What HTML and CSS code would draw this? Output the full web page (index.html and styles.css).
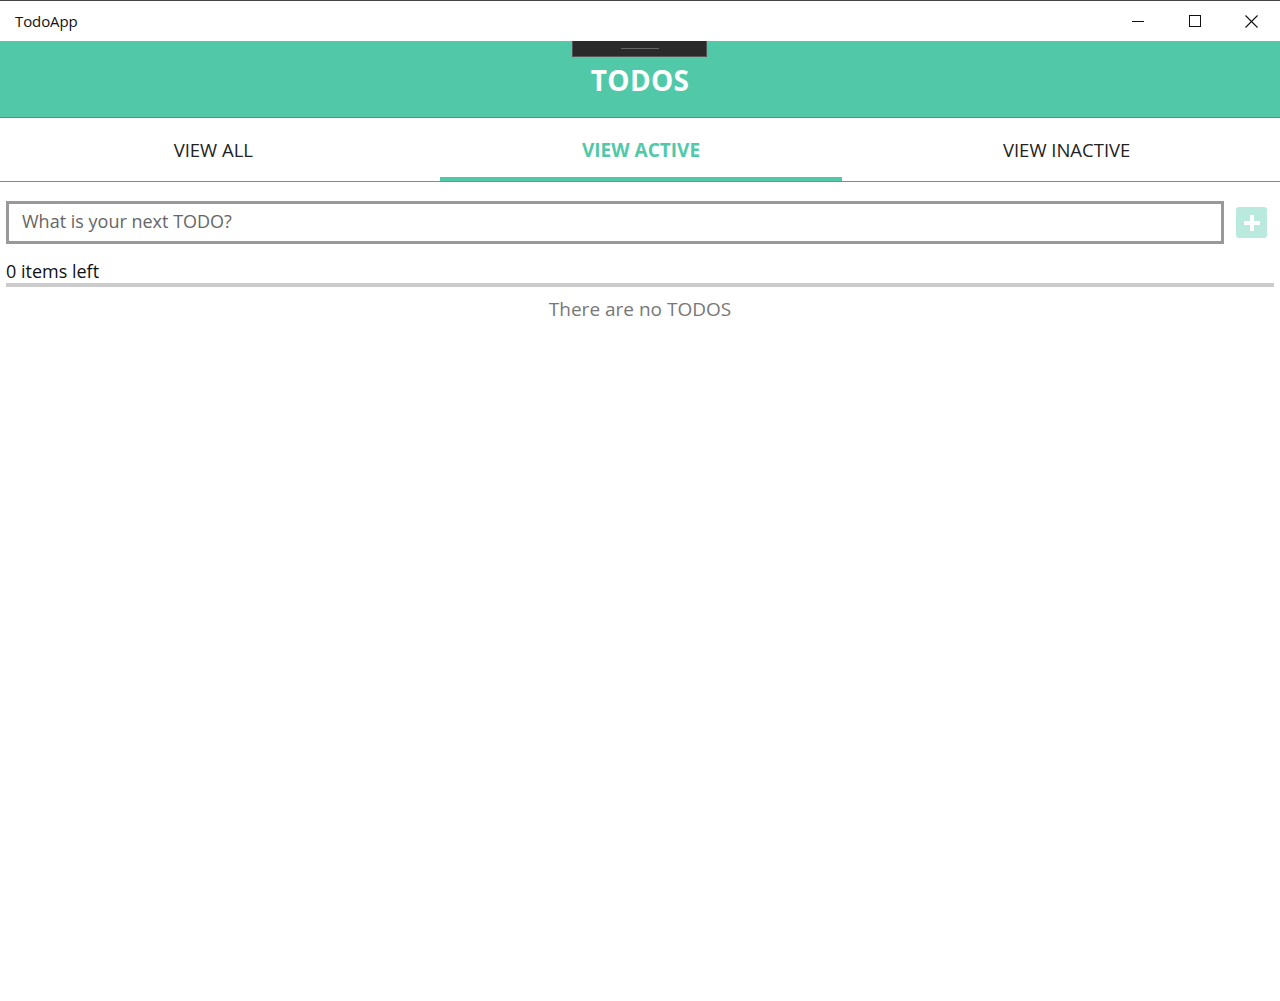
FILE: index.html
```html
<!DOCTYPE html>
<html>
<head>
<meta charset="utf-8">
<link rel="stylesheet" href="styles.css">
</head>
<body>
<div class="window">
  <div class="titlebar">
    <span class="title">TodoApp</span>
    <div class="controls">
      <span class="ctl"><svg width="12" height="12" viewBox="0 0 12 12"><path d="M0 6.5H12" stroke="#111" stroke-width="1"/></svg></span>
      <span class="ctl"><svg width="12" height="12" viewBox="0 0 12 12"><rect x="0.5" y="0.5" width="11" height="11" fill="none" stroke="#111" stroke-width="1"/></svg></span>
      <span class="ctl"><svg width="13" height="13" viewBox="0 0 13 13"><path d="M0.5 0.5L12.5 12.5M12.5 0.5L0.5 12.5" stroke="#111" stroke-width="1.1"/></svg></span>
    </div>
  </div>
  <header class="header">
    <div class="debugbar"><span class="debugline"></span></div>
    <h1 class="heading">TODOS</h1>
  </header>
  <nav class="tabs">
    <div class="tab">VIEW ALL</div>
    <div class="tab active">VIEW ACTIVE</div>
    <div class="tab">VIEW INACTIVE</div>
  </nav>
  <main class="content">
    <div class="entry">
      <input class="input" type="text" placeholder="What is your next TODO?">
      <button class="add"><svg width="20" height="20" viewBox="0 0 20 20"><path d="M10 2V18M2 10H18" stroke="#fff" stroke-width="4"/></svg></button>
    </div>
    <div class="count">0 items left</div>
    <div class="divider"></div>
    <div class="empty">There are no TODOS</div>
  </main>
</div>
</body>
</html>
```

FILE: styles.css
```css
html, body {
  margin: 0;
  padding: 0;
  background: #fff;
}
body {
  font-family: "Open Sans", "Noto Sans", sans-serif;
  color: #111;
}
.window {
  width: 1280px;
  height: 1001px;
  border-top: 1px solid #444;
  box-sizing: border-box;
  display: flex;
  flex-direction: column;
}
.titlebar {
  height: 40px;
  display: flex;
  align-items: center;
  justify-content: space-between;
}
.title {
  margin-left: 15px;
  font-size: 15px;
  color: #111;
  letter-spacing: -0.1px;
}
.controls {
  display: flex;
  height: 40px;
}
.ctl {
  width: 57px;
  height: 40px;
  display: flex;
  align-items: center;
  justify-content: center;
}
.header {
  height: 76px;
  background: #51c9a9;
  border-bottom: 1px solid #5f8f82;
  display: flex;
  flex-direction: column;
  align-items: center;
  position: relative;
}
.debugbar {
  position: absolute;
  top: 0;
  left: 572px;
  width: 133px;
  height: 15px;
  background: #2a2a2a;
  border: 1px solid #555;
  border-top: none;
  display: flex;
  justify-content: center;
  align-items: center;
}
.debugline {
  width: 38px;
  height: 1px;
  background: #666;
}
.heading {
  margin: 20px 0 0 0;
  font-size: 28px;
  line-height: 38px;
  font-weight: 700;
  color: #fff;
  letter-spacing: 0.3px;
}
.tabs {
  display: grid;
  grid-template-columns: 1fr 1fr 1fr;
  height: 63px;
  border-bottom: 1px solid #888;
}
.tab {
  display: flex;
  align-items: center;
  justify-content: center;
  font-size: 18.5px;
  color: #222;
}
.tab.active {
  color: #51c9a9;
  font-weight: 700;
  font-size: 19px;
  box-shadow: inset 0 -4px 0 #51c9a9;
  margin: 0 11px 0 13px;
}
.content {
  padding: 19px 6px 0 6px;
  display: flex;
  flex-direction: column;
}
.entry {
  display: flex;
  align-items: center;
  gap: 12px;
}
.input {
  flex: 1;
  height: 43px;
  box-sizing: border-box;
  border: 3px solid #999;
  padding: 0 13px 3px 13px;
  font-family: "Open Sans", "Noto Sans", sans-serif;
  font-size: 18px;
  color: #222;
  outline: none;
}
.input::placeholder {
  color: #666;
}
.add {
  width: 31px;
  height: 31px;
  border: none;
  border-radius: 3px;
  background: #b9eadd;
  display: flex;
  align-items: center;
  justify-content: center;
  padding: 0;
  margin-right: 7px;
}
.count {
  margin-top: 16px;
  font-size: 18px;
  line-height: 23px;
  color: #111;
}
.divider {
  height: 4px;
  background: #cccccc;
  margin-top: 0;
}
.empty {
  text-align: center;
  font-size: 19px;
  line-height: 26px;
  color: #777;
  margin-top: 9px;
}
```
